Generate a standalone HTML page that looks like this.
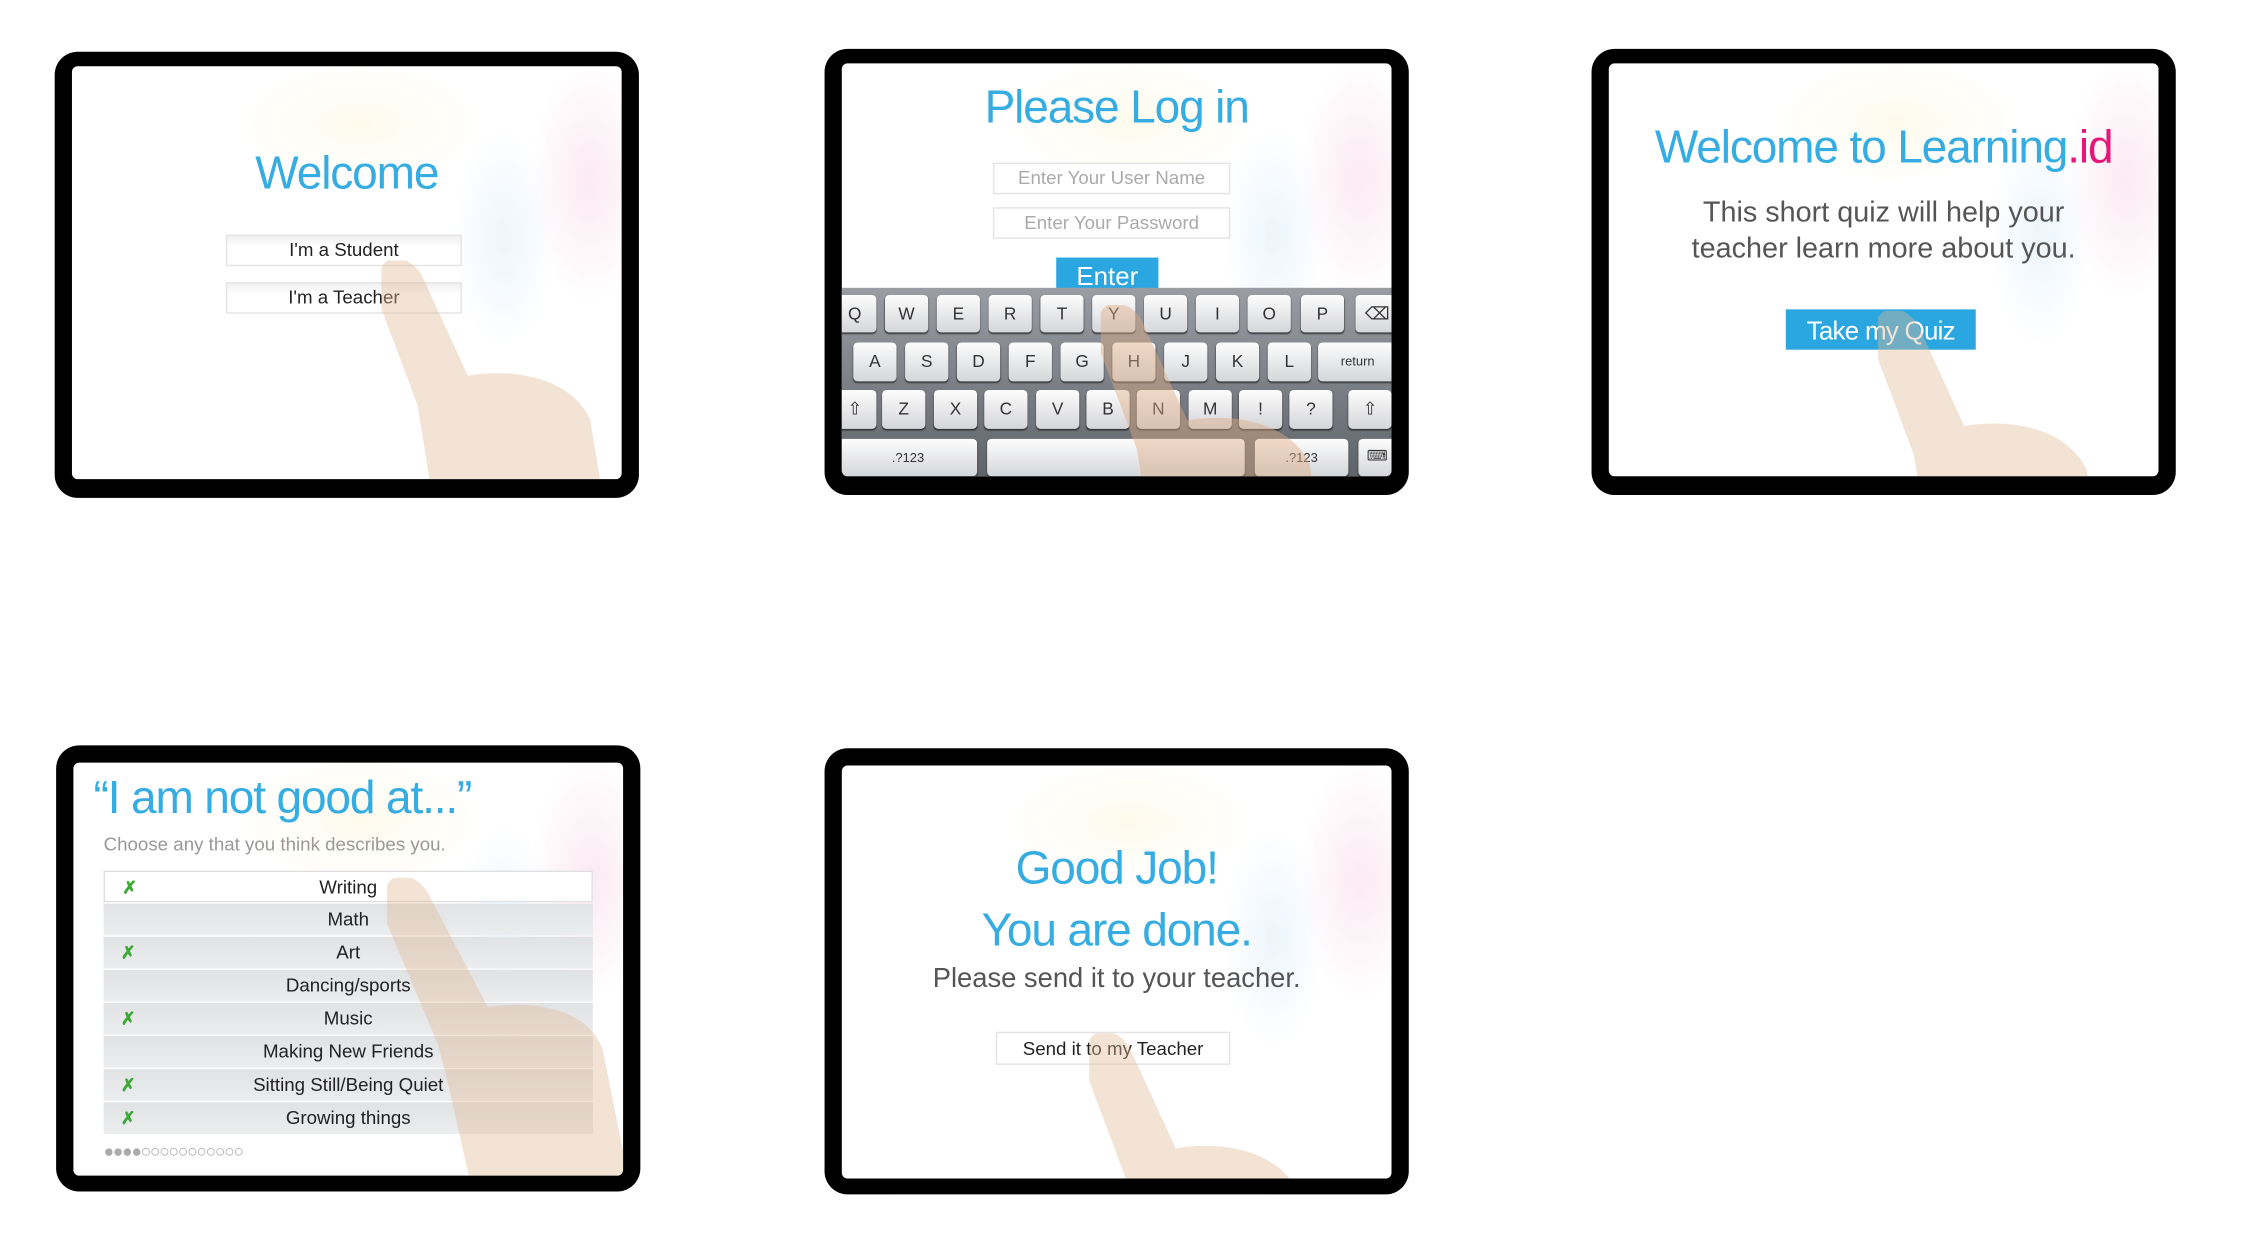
<!DOCTYPE html>
<html style="overflow:hidden;width:2256px;height:1251px;"><head><meta charset="utf-8"><style>
html,body{margin:0;padding:0;background:#fff;}
body{width:2256px;height:1251px;overflow:hidden;position:relative;}
#w{position:absolute;left:0;top:0;width:1560px;height:860px;overflow:hidden;transform:scale(1.439);transform-origin:0 0;font-family:"Liberation Sans",sans-serif;}
.f{position:absolute;background:#000;border-radius:16px;width:406px;height:310px;}
.s{position:absolute;left:12px;top:10px;width:382px;height:287px;background:#fff;overflow:hidden;border-radius:4px;}
.bg{position:absolute;inset:0;background:
radial-gradient(ellipse 60px 120px at 360px 80px,rgba(240,170,200,.25),transparent 70%),
radial-gradient(ellipse 50px 110px at 300px 120px,rgba(150,200,240,.18),transparent 70%),
radial-gradient(ellipse 120px 60px at 200px 40px,rgba(250,235,160,.2),transparent 70%);}
.a{position:absolute;}
.t{position:absolute;left:0;right:0;text-align:center;color:#35ace2;font-size:32px;letter-spacing:-0.8px;}
.btn{position:absolute;background:linear-gradient(#f0f0f0,#fff 40%);border:1px solid #e4e4e4;text-align:center;font-size:13px;color:#222;box-sizing:border-box;}
.k{position:absolute;background:linear-gradient(#fdfdfd,#d5d6d9);border-radius:3px;box-shadow:0 1px 1px #333;font-size:12px;color:#333;text-align:center;width:30px;}
.kb{position:absolute;left:0;top:156px;width:382px;height:131px;background:linear-gradient(#9a9ea4,#5f636a);}
.r{position:absolute;left:21px;width:340px;height:22px;line-height:22px;text-align:center;font-size:13px;color:#222;background:linear-gradient(#e1e2e4,#ecedee);}
.x{position:absolute;left:12px;color:#3aaa35;font-weight:bold;font-size:12px;}
.hand{position:absolute;}
</style></head><body><div id="w">

<!-- Frame 1 -->
<div class="f" style="left:38px;top:36px;"><div class="s"><div class="bg"></div>
<div class="t" style="top:56px;">Welcome</div>
<div class="btn" style="left:107px;top:117px;width:164px;height:22px;line-height:20px;">I'm a Student</div>
<div class="btn" style="left:107px;top:150px;width:164px;height:22px;line-height:20px;">I'm a Teacher</div>
<svg class="hand" style="left:215px;top:135px" width="200" height="200"><path d="M0,5 C5,-5 20,-3 28,10 L60,80 C90,75 130,80 145,110 L160,200 L40,200 C35,160 30,130 25,100 L-5,20 Z" fill="rgba(222,185,150,.4)"/></svg>
</div></div>

<!-- Frame 2 -->
<div class="f" style="left:573px;top:34px;"><div class="s" style="top:10px;"><div class="bg"></div>
<div class="t" style="top:12px;">Please Log in</div>
<div class="btn" style="left:105px;top:69px;width:165px;height:22px;line-height:20px;color:#aaa;background:#fff;">Enter Your User Name</div>
<div class="btn" style="left:105px;top:100px;width:165px;height:22px;line-height:20px;color:#aaa;background:#fff;">Enter Your Password</div>
<div class="a" style="left:149px;top:135px;width:71px;height:24px;background:#2aa6e0;color:#fff;font-size:18px;text-align:center;line-height:26px;">Enter</div>
<div class="kb">
<div class="k" style="left:-6px;top:5px;height:26px;line-height:26px">Q</div>
<div class="k" style="left:30px;top:5px;height:26px;line-height:26px">W</div>
<div class="k" style="left:66px;top:5px;height:26px;line-height:26px">E</div>
<div class="k" style="left:102px;top:5px;height:26px;line-height:26px">R</div>
<div class="k" style="left:138px;top:5px;height:26px;line-height:26px">T</div>
<div class="k" style="left:174px;top:5px;height:26px;line-height:26px">Y</div>
<div class="k" style="left:210px;top:5px;height:26px;line-height:26px">U</div>
<div class="k" style="left:246px;top:5px;height:26px;line-height:26px">I</div>
<div class="k" style="left:282px;top:5px;height:26px;line-height:26px">O</div>
<div class="k" style="left:319px;top:5px;height:26px;line-height:26px">P</div>
<div class="k" style="left:357px;top:5px;height:26px;line-height:26px">⌫</div>
<div class="k" style="left:8px;top:38px;height:27px;line-height:27px">A</div>
<div class="k" style="left:44px;top:38px;height:27px;line-height:27px">S</div>
<div class="k" style="left:80px;top:38px;height:27px;line-height:27px">D</div>
<div class="k" style="left:116px;top:38px;height:27px;line-height:27px">F</div>
<div class="k" style="left:152px;top:38px;height:27px;line-height:27px">G</div>
<div class="k" style="left:188px;top:38px;height:27px;line-height:27px">H</div>
<div class="k" style="left:224px;top:38px;height:27px;line-height:27px">J</div>
<div class="k" style="left:260px;top:38px;height:27px;line-height:27px">K</div>
<div class="k" style="left:296px;top:38px;height:27px;line-height:27px">L</div>
<div class="k" style="left:331px;top:38px;width:55px;height:27px;line-height:27px;font-size:9px">return</div>
<div class="k" style="left:-6px;top:71px;height:27px;line-height:27px">⇧</div>
<div class="k" style="left:28px;top:71px;height:27px;line-height:27px">Z</div>
<div class="k" style="left:64px;top:71px;height:27px;line-height:27px">X</div>
<div class="k" style="left:99px;top:71px;height:27px;line-height:27px">C</div>
<div class="k" style="left:135px;top:71px;height:27px;line-height:27px">V</div>
<div class="k" style="left:170px;top:71px;height:27px;line-height:27px">B</div>
<div class="k" style="left:205px;top:71px;height:27px;line-height:27px">N</div>
<div class="k" style="left:241px;top:71px;height:27px;line-height:27px">M</div>
<div class="k" style="left:276px;top:71px;height:27px;line-height:27px">!</div>
<div class="k" style="left:311px;top:71px;height:27px;line-height:27px">?</div>
<div class="k" style="left:352px;top:71px;height:27px;line-height:27px">⇧</div>
<div class="k" style="left:-2px;top:105px;width:96px;height:26px;line-height:26px;font-size:9px">.?123</div>
<div class="k" style="left:101px;top:105px;width:179px;height:26px"></div>
<div class="k" style="left:287px;top:105px;width:65px;height:26px;line-height:26px;font-size:9px">.?123</div>
<div class="k" style="left:359px;top:105px;width:26px;height:26px;line-height:26px;font-size:10px">⌨</div>
</div>
<svg class="hand" style="left:180px;top:168px" width="200" height="200"><path d="M0,5 C5,-5 20,-3 28,10 L60,80 C90,75 130,80 145,110 L160,200 L40,200 C35,160 30,130 25,100 L-5,20 Z" fill="rgba(222,170,130,.45)"/></svg>
</div></div>

<!-- Frame 3 -->
<div class="f" style="left:1106px;top:34px;"><div class="s"><div class="bg"></div>
<div class="t" style="top:40px;">Welcome to Learning<span style="color:#e6177a">.id</span></div>
<div class="a" style="left:0;right:0;top:92px;text-align:center;color:#555;font-size:20px;line-height:25px;">This short quiz will help your<br>teacher learn more about you.</div>
<div class="a" style="left:123px;top:171px;width:132px;height:28px;background:#2aa6e0;color:#fff;font-size:18px;text-align:center;line-height:30px;letter-spacing:-0.5px;">Take my Quiz</div>
<svg class="hand" style="left:187px;top:172px" width="200" height="200"><path d="M0,5 C5,-5 20,-3 28,10 L60,80 C90,75 130,80 145,110 L160,200 L40,200 C35,160 30,130 25,100 L-5,20 Z" fill="rgba(222,185,150,.4)"/></svg>
</div></div>

<!-- Frame 4 -->
<div class="f" style="left:39px;top:518px;"><div class="s" style="top:12px;"><div class="bg"></div>
<div class="a" style="left:14px;top:6px;color:#35ace2;font-size:32px;letter-spacing:-0.8px;">“I am not good at...”</div>
<div class="a" style="left:21px;top:49px;color:#999;font-size:13px;">Choose any that you think describes you.</div>
<div class="r" style="top:75px;background:#fff;border:1px solid #e0e0e0;box-sizing:border-box;"><span class="x">✗</span>Writing</div>
<div class="r" style="top:98px;">Math</div>
<div class="r" style="top:121px;"><span class="x">✗</span>Art</div>
<div class="r" style="top:144px;">Dancing/sports</div>
<div class="r" style="top:167px;"><span class="x">✗</span>Music</div>
<div class="r" style="top:190px;">Making New Friends</div>
<div class="r" style="top:213px;"><span class="x">✗</span>Sitting Still/Being Quiet</div>
<div class="r" style="top:236px;"><span class="x">✗</span>Growing things</div>
<div class="a" style="left:21px;top:263px;font-size:12px;color:#aaa;letter-spacing:-0.8px;">●●●●○○○○○○○○○○○</div>
<svg class="hand" style="left:218px;top:80px" width="200" height="220"><path d="M0,5 C5,-5 20,-3 28,10 L70,90 C100,85 140,90 150,120 L170,220 L60,220 C50,180 45,150 35,115 L-5,20 Z" fill="rgba(222,185,150,.4)"/></svg>
</div></div>

<!-- Frame 5 -->
<div class="f" style="left:573px;top:520px;"><div class="s" style="top:12px;"><div class="bg"></div>
<div class="t" style="top:53px;">Good Job!</div>
<div class="t" style="top:96px;">You are done.</div>
<div class="a" style="left:0;right:0;top:138px;text-align:center;color:#555;font-size:19px;">Please send it to your teacher.</div>
<div class="btn" style="left:107px;top:185px;width:163px;height:23px;line-height:21px;background:#fff;">Send it to my Teacher</div>
<svg class="hand" style="left:172px;top:186px" width="200" height="200"><path d="M0,5 C5,-5 20,-3 28,10 L60,80 C90,75 130,80 145,110 L160,200 L40,200 C35,160 30,130 25,100 L-5,20 Z" fill="rgba(222,185,150,.4)"/></svg>
</div></div>

</div></body></html>
